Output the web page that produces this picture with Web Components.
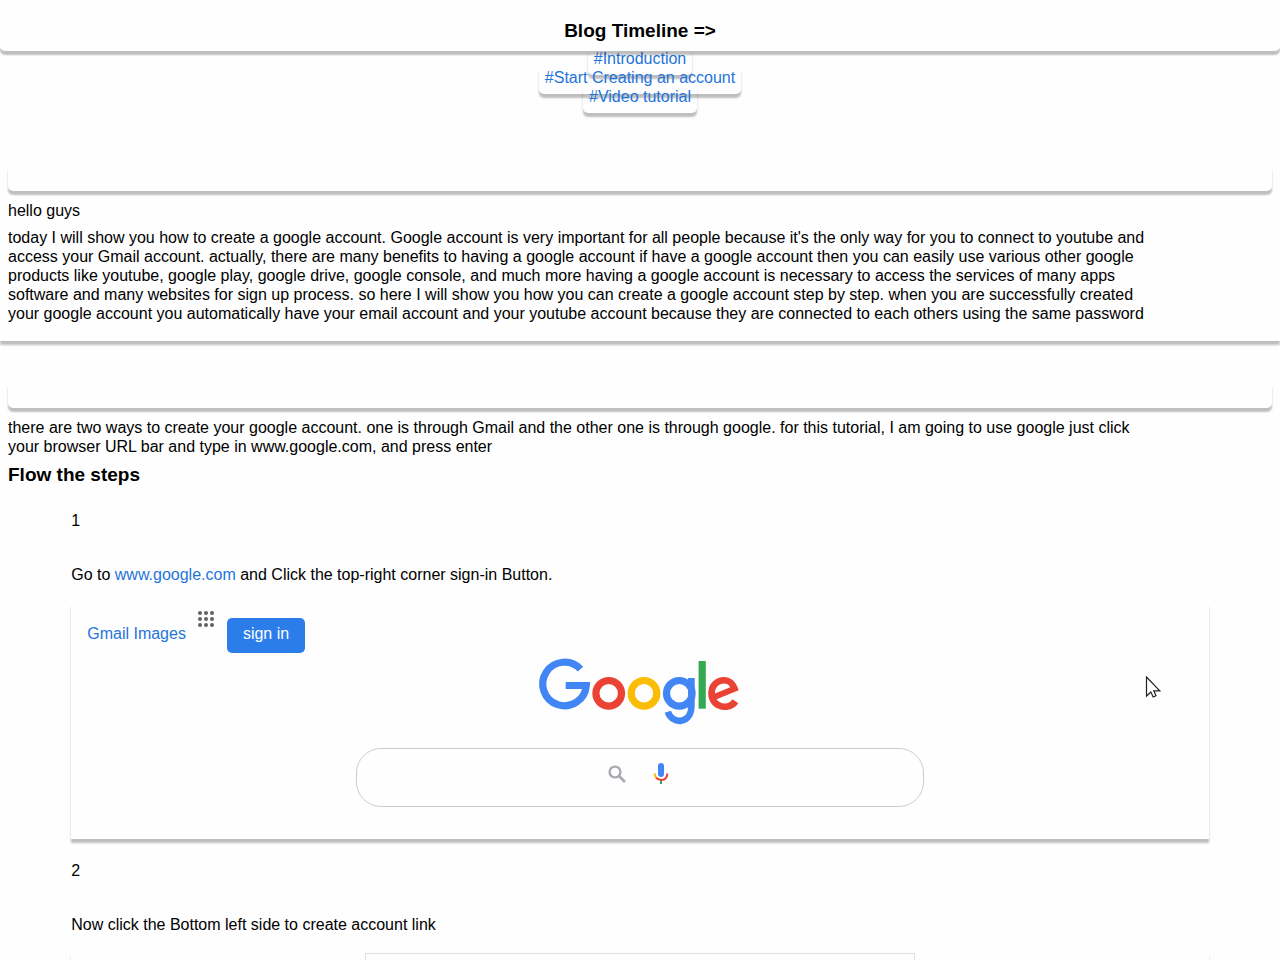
<!DOCTYPE html>
<html lang="en">
  <head>
    <meta charset="UTF-8" />
    <meta name="viewport" content="width=device-width, initial-scale=1" />
    <title>Blog Timeline</title>
    <style>
      body {
        margin: 0;
        background: #fefefe;
        color: #000;
        font: 16px/19px "Liberation Sans", Arial, sans-serif;
        --link: #1f74dc;
        --shadow: 0 4px 2px rgba(0, 0, 0, 0.25);
      }
      a {
        color: var(--link);
        text-decoration: none;
      }
      p {
        margin: 8px 0;
        max-width: 90%;
      }
      h3 {
        margin: 0;
        font-size: 19px;
        line-height: 22px;
      }
    </style>
  </head>
  <body>
    <blog-header>Blog Timeline =&gt;</blog-header>
    <blog-nav>
      <nav-link href="#introduction">#Introduction</nav-link>
      <nav-link href="#start">#Start Creating an account</nav-link>
      <nav-link href="#video">#Video tutorial</nav-link>
    </blog-nav>

    <blog-section id="introduction" class="first">
      <p>hello guys</p>
      <p>today I will show you how to create a google account. Google account is very important for all people because it's the only way for you to connect to youtube and access your Gmail account. actually, there are many benefits to having a google account if have a google account then you can easily use various other google products like youtube, google play, google drive, google console, and much more having a google account is necessary to access the services of many apps software and many websites for sign up process. so here I will show you how you can create a google account step by step. when you are successfully created your google account you automatically have your email account and your youtube account because they are connected to each others using the same password</p>
    </blog-section>

    <blog-section id="start">
      <p>there are two ways to create your google account. one is through Gmail and the other one is through google. for this tutorial, I am going to use google just click your browser URL bar and type in www.google.com, and press enter</p>
      <h3>Flow the steps</h3>
      <blog-step number="1">
        Go to <a href="https://www.google.com">www.google.com</a> and Click the top-right corner sign-in Button.
        <google-home slot="demo"></google-home>
      </blog-step>
      <blog-step number="2">
        Now click the Bottom left side to create account link
        <signin-form slot="demo"></signin-form>
      </blog-step>
    </blog-section>

    <script>
      class BlogHeader extends HTMLElement {
        constructor() {
          super();
          this.attachShadow({ mode: "open" });
          this.shadowRoot.innerHTML = `
            <style>
              :host {
                display: block;
                position: sticky;
                top: 0;
                z-index: 1;
                padding: 20px 8px 9px;
                background: #fefefe;
                border-radius: 5px;
                box-shadow: var(--shadow);
                text-align: center;
              }
              h1 {
                margin: 0;
                font-size: 19px;
                line-height: 22px;
              }
            </style>
            <h1><slot></slot></h1>
          `;
        }
      }

      class BlogNav extends HTMLElement {
        constructor() {
          super();
          this.attachShadow({ mode: "open" });
          // The first link is tucked a little under the header
          this.shadowRoot.innerHTML = `
            <style>
              :host { display: block; margin-top: -2px; }
              nav {
                display: flex;
                flex-direction: column;
                align-items: center;
              }
            </style>
            <nav><slot></slot></nav>
          `;
        }
      }

      class NavLink extends HTMLElement {
        constructor() {
          super();
          this.attachShadow({ mode: "open" });
          this.shadowRoot.innerHTML = `
            <style>
              :host { display: block; }
              a {
                padding: 4px 6px 8px;
                color: var(--link);
                text-decoration: none;
                border-radius: 5px;
                box-shadow: var(--shadow);
              }
            </style>
            <a><slot></slot></a>
          `;
          this.shadowRoot.querySelector("a").href = this.getAttribute("href");
        }
      }

      class BlogSection extends HTMLElement {
        constructor() {
          super();
          this.attachShadow({ mode: "open" });
          this.shadowRoot.innerHTML = `
            <style>
              :host {
                display: block;
                padding: 40px 8px 10px;
              }
              :host(.first) {
                padding-top: 58px;
                box-shadow: var(--shadow);
              }
              .strip {
                height: 27px;
                margin-bottom: 10px;
                border-radius: 5px;
                box-shadow: var(--shadow);
              }
            </style>
            <div class="strip"></div>
            <slot></slot>
          `;
        }
      }

      class BlogStep extends HTMLElement {
        constructor() {
          super();
          this.attachShadow({ mode: "open" });
          this.shadowRoot.innerHTML = `
            <style>
              :host {
                display: block;
                width: 90%;
                margin: 22px auto 0;
              }
              :host(:first-of-type) { margin-top: 25px; }
              .number { margin-bottom: 35px; }
              .demo {
                margin-top: 19px;
                box-shadow: var(--shadow);
              }
            </style>
            <div class="number"></div>
            <div class="text"><slot></slot></div>
            <div class="demo"><slot name="demo"></slot></div>
          `;
          this.shadowRoot.querySelector(".number").textContent = this.getAttribute("number");
        }
      }

      class GoogleHome extends HTMLElement {
        constructor() {
          super();
          this.attachShadow({ mode: "open" });
          this.shadowRoot.innerHTML = `
            <style>
              :host {
                display: block;
                position: relative;
                padding: 15px 16px 32px;
              }
              .top { display: flex; align-items: flex-start; }
              .links { padding-top: 6px; }
              a { color: var(--link); text-decoration: none; }
              .apps { width: 18px; height: 18px; margin: -8px 12px 0 11px; }
              button {
                font: inherit;
                border: 0;
                background: none;
              }
              .signin {
                padding: 6px 16px 10px;
                border-radius: 5px;
                background: #2b7de9;
                color: #fff;
              }
              svg { display: block; }
              .logo { margin: 5px auto 23px; overflow: visible; }
              .search {
                display: grid;
                box-sizing: border-box;
                width: 568px;
                max-width: 100%;
                height: 59px;
                margin: 0 auto;
                border: 1px solid #ccc;
                border-radius: 25px;
              }
              input, .icons { grid-area: 1 / 1; }
              input {
                min-width: 0;
                padding: 0 20px;
                border: 0;
                border-radius: 25px;
                background: none;
                font: inherit;
              }
              .icons {
                display: flex;
                justify-content: center;
                align-items: flex-start;
                gap: 26px;
                padding: 14px 4px 0 0;
                pointer-events: none;
              }
              .cursor { position: absolute; right: 48px; top: 73px; }
            </style>
            <div class="top">
              <div class="links"><a href="#gmail">Gmail</a> <a href="#images">Images</a></div>
              <svg class="apps" viewBox="0 0 18 18" fill="#606366">
                <circle cx="3" cy="3" r="2"/><circle cx="9" cy="3" r="2"/><circle cx="15" cy="3" r="2"/>
                <circle cx="3" cy="9" r="2"/><circle cx="9" cy="9" r="2"/><circle cx="15" cy="9" r="2"/>
                <circle cx="3" cy="15" r="2"/><circle cx="9" cy="15" r="2"/><circle cx="15" cy="15" r="2"/>
              </svg>
              <button class="signin" type="button">sign in</button>
            </div>
            <svg class="logo" width="200" height="67" viewBox="0 0 200 67" fill="none" stroke-width="7.2" role="img" aria-label="Google">
              <path stroke="#4285f4" d="M40.5 11.1A21.8 21.8 0 1 0 46.3 27.5H25.7"/>
              <circle stroke="#ea4335" cx="68.7" cy="35.3" r="12.8"/>
              <circle stroke="#fbbc05" cx="104" cy="35.3" r="12.8"/>
              <circle stroke="#4285f4" cx="139.3" cy="35.3" r="12.8"/>
              <path stroke="#4285f4" stroke-width="6.6" d="M151.4 20V48C151.4 66.5 132 67 127.8 53.8"/>
              <path stroke="#34a853" d="M162.2 3V50.7"/>
              <path fill="#ea4335" fill-rule="evenodd" d="M198.7 32.3C196.5 24.2 191 19 184 19C175 19 168.2 26 168.2 35.4C168.2 45 175.5 52 185 52C190.800 52 195.300 49.500 198.300 45.200L192.500 41.200C190.700 43.900 188.300 45.400 185 45.400C181.200 45.400 178.300 43.700 176.600 41.200ZM174.900 35.600L190.200 29.200C189.300 27 186.900 25.500 184 25.500C179.200 25.500 174.700 29.500 174.900 35.600Z"/>
            </svg>
            <div class="search">
              <input type="text" aria-label="Search">
              <div class="icons">
                <svg width="20" height="21" viewBox="0 0 20 21" fill="none" stroke="#a8abb0">
                  <circle cx="8" cy="9" r="5.4" stroke-width="2.4"/>
                  <path d="M12 13L18 19" stroke-width="2.6"/>
                </svg>
                <svg width="16" height="22" viewBox="0 0 16 22" fill="none" stroke-width="2">
                  <rect x="5" y="0" width="6" height="14" rx="3" fill="#4285f4"/>
                  <path stroke="#34a853" d="M8 16V21"/>
                  <path stroke="#ea4335" d="M3 14.5C5.5 17.5 11 18 13.4 14.2C14 13.2 14.3 12 14.3 10.5"/>
                  <path stroke="#fbbc05" d="M1.6 10.5C1.6 12.3 2.1 13.5 3.3 14.8"/>
                </svg>
              </div>
            </div>
            <svg class="cursor" width="16" height="22" viewBox="0 0 16 22" fill="#fff" stroke="#222" stroke-width="1.2">
              <path d="M1.5 1V20L5.8 16L8.2 21L11 19.8L8.8 14.8H14.8Z"/>
            </svg>
          `;
        }
      }

      class SigninForm extends HTMLElement {
        constructor() {
          super();
          this.attachShadow({ mode: "open" });
          this.shadowRoot.innerHTML = `
            <style>
              :host { display: block; }
              .box {
                box-sizing: border-box;
                max-width: 550px;
                height: 400px;
                margin: 0 auto;
                border: 1px solid #e0e0e0;
              }
            </style>
            <div class="box"></div>
          `;
        }
      }

      window.customElements.define("blog-header", BlogHeader);
      window.customElements.define("blog-nav", BlogNav);
      window.customElements.define("nav-link", NavLink);
      window.customElements.define("blog-section", BlogSection);
      window.customElements.define("blog-step", BlogStep);
      window.customElements.define("google-home", GoogleHome);
      window.customElements.define("signin-form", SigninForm);
    </script>
  </body>
</html>
